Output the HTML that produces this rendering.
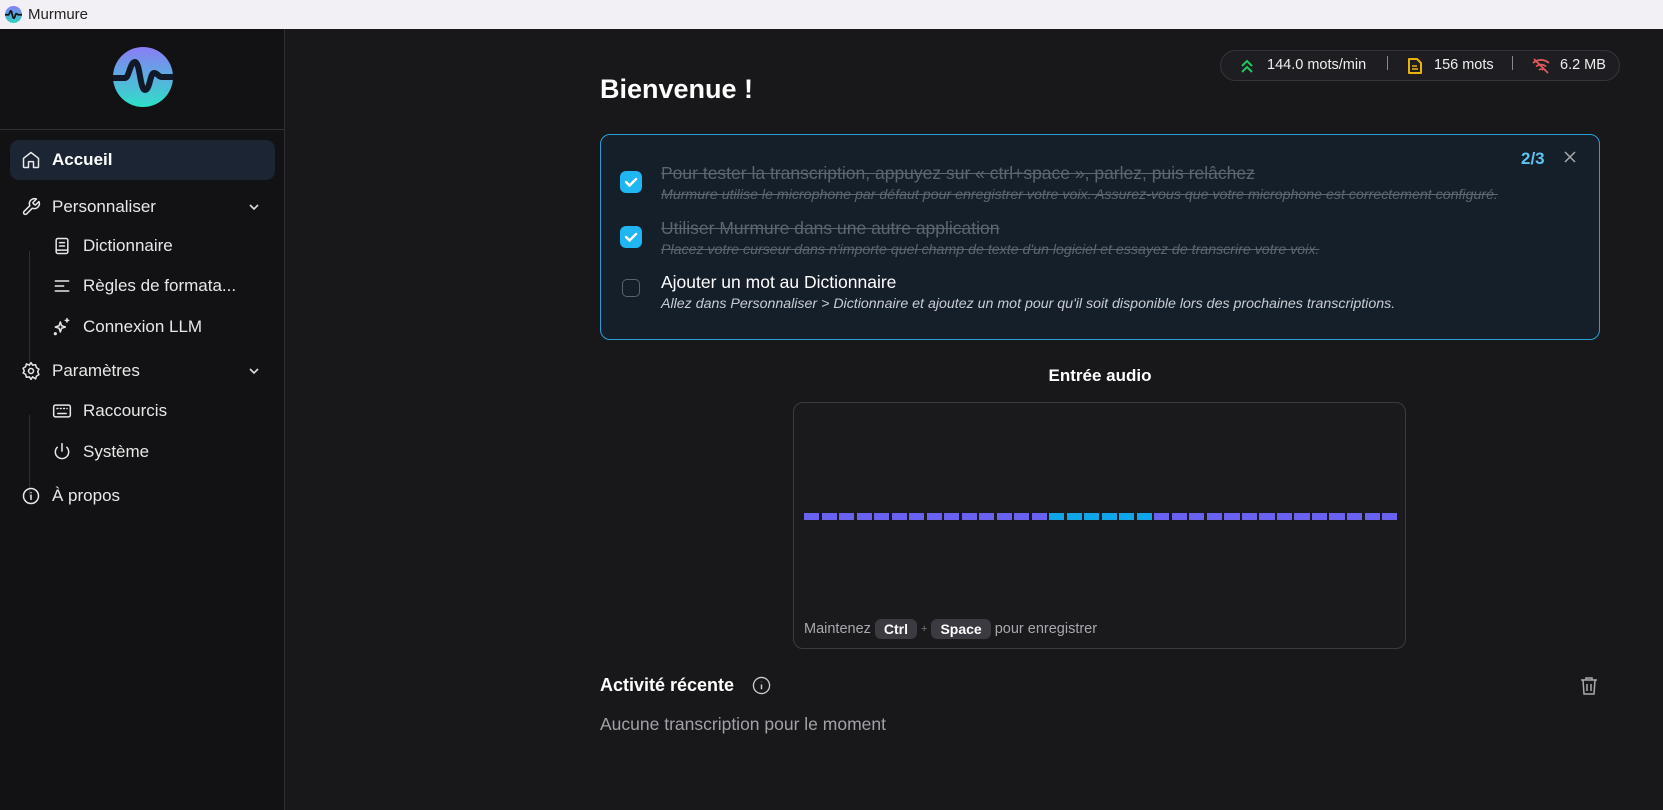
<!DOCTYPE html><html><head><meta charset="utf-8"><style>
*{box-sizing:border-box;margin:0;padding:0}
body{width:1663px;height:810px;overflow:hidden;background:#18181b;font-family:"Liberation Sans",sans-serif;color:#e5e5e5;position:relative}
.abs{position:absolute}
.title{left:0;top:0;width:1663px;height:29px;background:#f3f0f5;color:#222;font-size:15px}
.side{left:0;top:29px;width:285px;height:781px;background:#121214;border-right:1px solid #2e2e33}
.nav{position:absolute;left:21px;font-size:17px;color:#e8e8e8;display:flex;align-items:center;gap:11px;height:24px}
.nav svg{width:20px;height:20px;fill:none;stroke:#e8e8e8;stroke-width:1.8;stroke-linecap:round;stroke-linejoin:round}
.sub{left:52px}
.chev{position:absolute;left:248px;width:12px;height:12px}
.card{left:600px;top:134px;width:1000px;height:206px;background:#151f2a;border:1px solid #2a9fd6;border-radius:10px}
.cb{position:absolute;left:19px;width:22px;height:22px;border-radius:6px;background:#1fb6f2}
.it{position:absolute;left:60px}
.h{font-size:17.5px}
.s{font-size:14.2px;font-style:italic;margin-top:3px}
.done{color:#5d6570;text-decoration:line-through}
.kbd{display:inline-block;background:#3a3a40;color:#fff;font-weight:bold;border-radius:6px;padding:2px 9px;font-size:14px}
</style></head><body>
<div class="abs title"><svg class="abs" style="left:5px;top:6px" width="17" height="17" viewBox="0 0 60 60"><defs><linearGradient id="g0" x1="0" y1="0" x2="0" y2="1"><stop offset="0" stop-color="#8b7cf6"/><stop offset="1" stop-color="#2dd4bf"/></linearGradient></defs><circle cx="30" cy="30" r="30" fill="url(#g0)"/><path d="M0 31h12c4 0 5-14 9-14s5 26 10 26 5-16 9-16 4 4 8 4h12" stroke="#111" stroke-width="6" fill="none"/></svg><span class="abs" style="left:28px;top:6px">Murmure</span></div>
<div class="abs side">
<svg class="abs" style="left:113px;top:18px" width="60" height="60" viewBox="0 0 60 60"><defs><linearGradient id="g1" x1="0" y1="0" x2="0" y2="1"><stop offset="0" stop-color="#8b7cf6"/><stop offset="1" stop-color="#2de0c8"/></linearGradient></defs><circle cx="30" cy="30" r="30" fill="url(#g1)"/><path d="M0 31h12c4 0 5-16 10-16s5 28 10 28 5-17 9-17 4 4 8 4h11" stroke="#111827" stroke-width="6" fill="none" stroke-linecap="round"/></svg>
<div class="abs" style="left:0;top:100px;width:285px;height:1px;background:#2e2e33"></div>
<div class="abs" style="left:10px;top:111px;width:265px;height:40px;background:#1b2533;border-radius:9px"></div>
<div class="nav" style="top:119px;font-weight:bold;color:#fff"><svg viewBox="0 0 24 24"><path d="M3 10l9-7 9 7v10a1 1 0 0 1-1 1h-5v-7h-6v7H4a1 1 0 0 1-1-1z"/></svg>Accueil</div>
<div class="nav" style="top:166px"><svg viewBox="0 0 24 24"><path d="M14.7 6.3a1 1 0 0 0 0 1.4l1.6 1.6a1 1 0 0 0 1.4 0l3.8-3.8a6 6 0 0 1-7.9 7.9l-6.9 6.9a2.1 2.1 0 0 1-3-3l6.9-6.9a6 6 0 0 1 7.9-7.9z"/></svg>Personnaliser</div>
<svg class="chev" style="top:172px" viewBox="0 0 12 12"><path d="M2 4l4 4 4-4" stroke="#ddd" stroke-width="1.6" fill="none"/></svg>
<div class="abs" style="left:29px;top:222px;width:1px;height:122px;background:#2e2e33"></div>
<div class="nav sub" style="top:205px"><svg viewBox="0 0 24 24"><rect x="5" y="3" width="14" height="18" rx="2"/><path d="M9 8h6M9 12h6M5 17h14"/></svg>Dictionnaire</div>
<div class="nav sub" style="top:245px"><svg viewBox="0 0 24 24"><path d="M4 6h16M4 12h10M4 18h16"/></svg>Règles de formata...</div>
<div class="nav sub" style="top:286px"><svg viewBox="0 0 24 24"><path d="M10 6l1.5 4.5L16 12l-4.5 1.5L10 18l-1.5-4.5L4 12l4.5-1.5z"/><path d="M18 2v4M16 4h4"/><circle cx="4" cy="20" r="1"/></svg>Connexion LLM</div>
<div class="nav" style="top:330px"><svg viewBox="0 0 24 24"><circle cx="12" cy="12" r="3"/><path d="M12 2l2 3 3.5-.5 1 3.4 3 1.8-1.5 3.3 1.5 3.3-3 1.8-1 3.4L14 19l-2 3-2-3-3.5.5-1-3.4-3-1.8L4 12 2.5 8.7l3-1.8 1-3.4L10 5z"/></svg>Paramètres</div>
<svg class="chev" style="top:336px" viewBox="0 0 12 12"><path d="M2 4l4 4 4-4" stroke="#ddd" stroke-width="1.6" fill="none"/></svg>
<div class="abs" style="left:29px;top:386px;width:1px;height:82px;background:#2e2e33"></div>
<div class="nav sub" style="top:370px"><svg viewBox="0 0 24 24"><rect x="2" y="5" width="20" height="14" rx="2"/><path d="M6 9h1M10 9h1M14 9h1M18 9h0M7 15h10"/></svg>Raccourcis</div>
<div class="nav sub" style="top:411px"><svg viewBox="0 0 24 24"><path d="M12 2v9M6.3 6.3a8 8 0 1 0 11.4 0"/></svg>Système</div>
<div class="nav" style="top:455px"><svg viewBox="0 0 24 24"><circle cx="12" cy="12" r="9"/><path d="M12 11v5M12 8v.01"/></svg>À propos</div>
</div>
<div class="abs" style="left:1220px;top:50px;width:400px;height:31px;border:1px solid #34343a;background:#1e1e22;border-radius:16px;font-size:14.5px;color:#eee">
<svg class="abs" style="left:19px;top:8px" width="14" height="14" viewBox="0 0 14 14"><path d="M2 7l5-5 5 5M2 13l5-5 5 5" stroke="#22c55e" stroke-width="2" fill="none"/></svg>
<span class="abs" style="left:46px;top:6px">144.0 mots/min</span>
<div class="abs" style="left:166px;top:5px;width:1px;height:14px;background:#888"></div>
<svg class="abs" style="left:186px;top:6px" width="16" height="18" viewBox="0 0 16 18"><path d="M2 2h8l4 4v10H2z" stroke="#eab308" stroke-width="2" fill="none" stroke-linejoin="round"/><path d="M5 9h5M5 12h6" stroke="#eab308" stroke-width="1.6"/></svg>
<span class="abs" style="left:213px;top:6px">156 mots</span>
<div class="abs" style="left:291px;top:5px;width:1px;height:14px;background:#888"></div>
<svg class="abs" style="left:310px;top:6px" width="20" height="18" viewBox="0 0 20 18"><path d="M2 6a12 12 0 0 1 16 0M5 9.5a7.5 7.5 0 0 1 10 0M8 13a3 3 0 0 1 4 0M3 2l14 14" stroke="#e05a5a" stroke-width="1.8" fill="none"/></svg>
<span class="abs" style="left:339px;top:6px">6.2 MB</span></div>
<div class="abs" style="left:600px;top:74px;font-size:27px;font-weight:bold;color:#fff">Bienvenue !</div>
<div class="abs card">
<span class="abs" style="left:920px;top:14px;color:#5fc3f0;font-weight:bold;font-size:17px">2/3</span>
<svg class="abs" style="left:962px;top:15px" width="14" height="14" viewBox="0 0 14 14"><path d="M2 2l10 10M12 2L2 12" stroke="#aaa" stroke-width="1.5"/></svg>
<div class="cb" style="top:36px"><svg width="22" height="22" viewBox="0 0 22 22"><path d="M6 11l3.5 3.5L16 8" stroke="#fff" stroke-width="2.4" fill="none" stroke-linecap="round"/></svg></div>
<div class="it done" style="top:28px"><div class="h">Pour tester la transcription, appuyez sur « ctrl+space », parlez, puis relâchez</div><div class="s">Murmure utilise le microphone par défaut pour enregistrer votre voix. Assurez-vous que votre microphone est correctement configuré.</div></div>
<div class="cb" style="top:91px"><svg width="22" height="22" viewBox="0 0 22 22"><path d="M6 11l3.5 3.5L16 8" stroke="#fff" stroke-width="2.4" fill="none" stroke-linecap="round"/></svg></div>
<div class="it done" style="top:83px"><div class="h">Utiliser Murmure dans une autre application</div><div class="s">Placez votre curseur dans n'importe quel champ de texte d'un logiciel et essayez de transcrire votre voix.</div></div>
<div class="abs" style="left:21px;top:144px;width:18px;height:18px;border:1.5px solid #5a6270;border-radius:5px"></div>
<div class="it" style="top:137px;color:#fff"><div class="h">Ajouter un mot au Dictionnaire</div><div class="s" style="color:#c8ccd2">Allez dans Personnaliser &gt; Dictionnaire et ajoutez un mot pour qu'il soit disponible lors des prochaines transcriptions.</div></div>
</div>
<div class="abs" style="left:600px;width:1000px;text-align:center;top:366px;font-size:17px;font-weight:bold;color:#fff">Entrée audio</div>
<div class="abs" style="left:793px;top:402px;width:613px;height:247px;border:1px solid #3a3a40;border-radius:10px;background:#1a1a1d">
<div class="abs" style="left:10px;top:110px;width:593px;height:7px;display:flex;gap:2.4px">
<script>for(let i=0;i<34;i++){document.write('<div style="flex:1;background:'+((i>=14&&i<20)?'#0ea5e9':'#6961ef')+'"></div>')}</script></div>
<div class="abs" style="left:10px;top:216px;font-size:14.5px;color:#a8a8ae;display:flex;align-items:center;gap:4px">Maintenez <span class="kbd">Ctrl</span> <span style="font-size:11px;color:#777">+</span> <span class="kbd">Space</span> pour enregistrer</div>
</div>
<div class="abs" style="left:600px;top:675px;font-size:18px;font-weight:bold;color:#fff">Activité récente</div>
<svg class="abs" style="left:752px;top:676px" width="19" height="19" viewBox="0 0 20 20"><circle cx="10" cy="10" r="8.5" stroke="#ccc" stroke-width="1.4" fill="none"/><path d="M10 9v5M10 6v.5" stroke="#ccc" stroke-width="1.6"/></svg>
<svg class="abs" style="left:1580px;top:676px" width="18" height="20" viewBox="0 0 18 20"><path d="M1 4h16M6 4V2h6v2M3 4l1 14h10l1-14M7 8v7M11 8v7" stroke="#aaa" stroke-width="1.5" fill="none"/></svg>
<div class="abs" style="left:600px;top:714px;font-size:17.5px;color:#a1a1a8">Aucune transcription pour le moment</div>
</body></html>
